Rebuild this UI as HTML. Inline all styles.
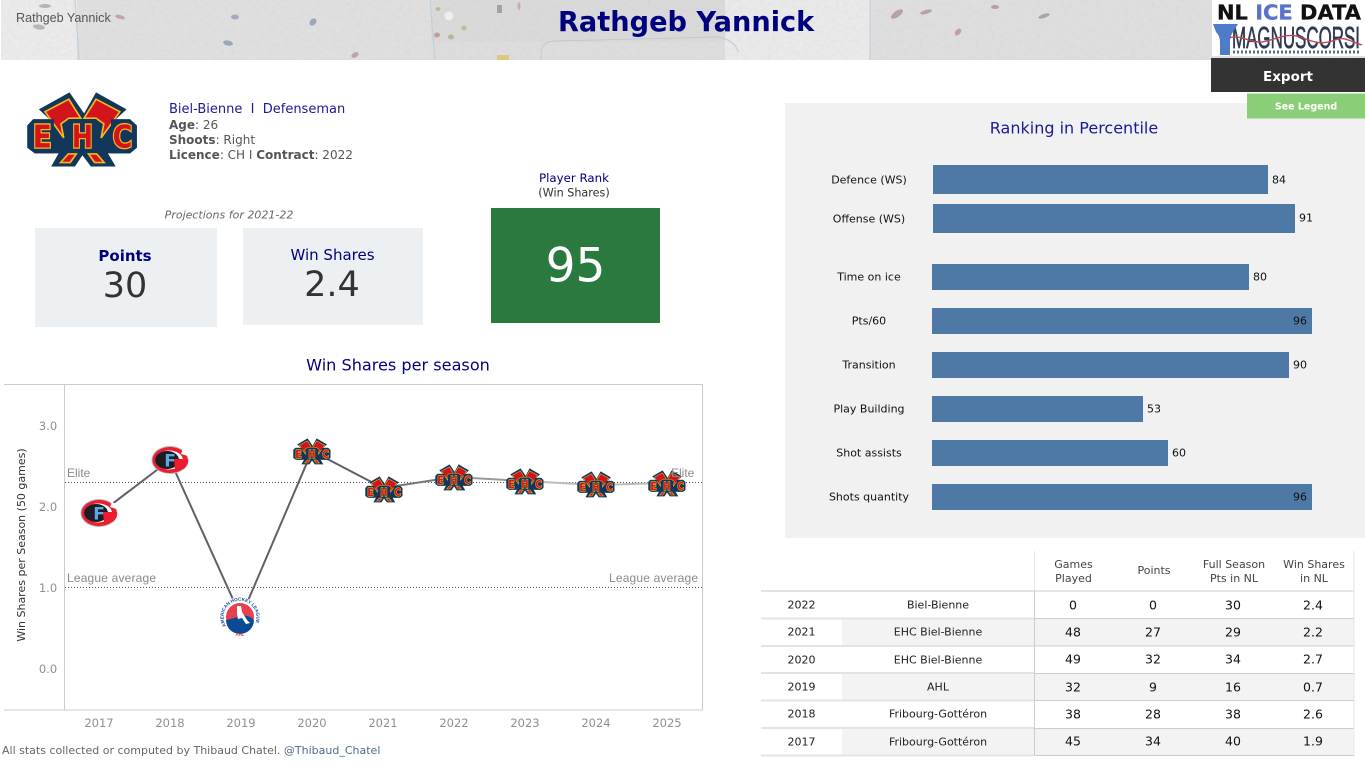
<!DOCTYPE html>
<html><head><meta charset="utf-8"><title>Rathgeb Yannick</title>
<style>
html,body{margin:0;padding:0;background:#fff}
#p{position:relative;width:1365px;height:767px;overflow:hidden;background:#fff;font-family:"DejaVu Sans","Liberation Sans",sans-serif}
.a{position:absolute;white-space:nowrap}
.c{transform:translate(-50%,-50%);text-align:center}
.b{position:absolute;background:#4e79a7}
.l{position:absolute;left:769px;width:200px;text-align:center;font-size:11px;color:#111;transform:translateY(-50%)}
.v{position:absolute;font-size:11px;color:#111;transform:translateY(-50%)}
.t{position:absolute;transform:translate(-50%,-50%);white-space:nowrap;color:#222}
.n{font-size:12.5px;color:#111}
.y{font-size:11px}
.h{font-size:11px;color:#444;text-align:center;line-height:14px}
svg{position:absolute;left:0;top:0}
</style></head><body><div id="p">

<svg width="1365" height="60" style="top:0">
<defs><filter id="nz" x="0" y="0" width="100%" height="100%"><feTurbulence type="fractalNoise" baseFrequency=".25 .3" numOctaves="3" seed="4"/><feColorMatrix values="0 0 0 0 .55  0 0 0 0 .55  0 0 0 0 .55  .9 .9 0 0 -.62"/></filter></defs>
<rect x="1" width="1364" height="60" fill="#e0e0e0"/>
<rect x="1" width="76" height="60" fill="#ececec"/>
<rect x="431" width="295" height="42" fill="#dadada"/>
<rect x="431" y="42" width="295" height="18" fill="#dedede"/>
<rect x="725" width="145" height="60" fill="#ebebeb"/>
<rect x="870" width="341" height="60" fill="#dfdfdf"/>
<rect x="1" width="1364" height="60" filter="url(#nz)" opacity=".25"/>
<path d="M75 0L79 60M430 0L435 60M870 0V60" stroke="#bccddd" stroke-width="1" fill="none"/>
<path d="M541 60V53Q541 41 556 41L718 37Q735 40 738 52" stroke="#bcc9d9" fill="none"/>
<g opacity=".7">
<ellipse cx="45" cy="6" rx="6" ry="2" fill="#a0a0a0"/><ellipse cx="39" cy="27" rx="6" ry="2.5" fill="#aaa0a0" transform="rotate(8 39 27)"/>
<ellipse cx="120" cy="17" rx="5" ry="2" fill="#b88a92" transform="rotate(15 120 17)"/><ellipse cx="235" cy="17" rx="4" ry="2.5" fill="#8a97b0"/>
<ellipse cx="228" cy="43" rx="5" ry="2.5" fill="#7f90ab" transform="rotate(10 228 43)"/><ellipse cx="313" cy="22" rx="3" ry="4" fill="#7f90ab" transform="rotate(40 313 22)"/>
<ellipse cx="355" cy="55" rx="4" ry="2.5" fill="#b88a92" transform="rotate(-30 355 55)"/><ellipse cx="437" cy="35" rx="3" ry="2.5" fill="#b58a7c"/>
<ellipse cx="438" cy="9" rx="2.5" ry="2" fill="#aab27c"/><ellipse cx="449" cy="16" rx="4.5" ry="4.5" fill="#f7f7f7"/>
<ellipse cx="451" cy="37" rx="3" ry="2.5" fill="#a0ad84"/><ellipse cx="464" cy="28" rx="2.5" ry="2.5" fill="#b5ae7c"/>
<rect x="497" y="5" width="5" height="8" fill="#8c8c8c"/><ellipse cx="519" cy="6" rx="1.5" ry="4" fill="#c49ca2"/>
<rect x="497" y="55" width="12" height="5" fill="#e2c050"/>
<ellipse cx="897" cy="14" rx="7" ry="3" fill="#ad8493" transform="rotate(-35 897 14)"/><ellipse cx="926" cy="12" rx="6" ry="2" fill="#ad8493" transform="rotate(-15 926 12)"/>
<ellipse cx="995" cy="7" rx="4" ry="2" fill="#ad8493"/><ellipse cx="1044" cy="16" rx="6" ry="2" fill="#9f8a93" transform="rotate(-20 1044 16)"/>
<ellipse cx="958" cy="32" rx="4" ry="2.5" fill="#b58493" transform="rotate(-50 958 32)"/>
</g>
</svg>
<div class="a" style="left:16px;top:11px;font:12.6px 'Liberation Sans',sans-serif;color:#555">Rathgeb Yannick</div>
<div class="a" style="left:558px;top:6px;font-weight:bold;font-size:27.2px;color:#00007f;line-height:34px">Rathgeb Yannick</div>

<div class="a" style="left:1212px;top:0;width:153px;height:56px;background:#fff"></div>
<svg width="1365" height="60">
<text x="1217" y="19.5" font-family="'DejaVu Sans',sans-serif" font-weight="bold" font-size="20" textLength="144" lengthAdjust="spacingAndGlyphs" stroke="#111" stroke-width=".3"><tspan fill="#111">NL </tspan><tspan fill="#5a72c8" stroke="#5a72c8">ICE </tspan><tspan fill="#111">DATA</tspan></text>
<text x="1232" y="48" font-family="'Liberation Sans',sans-serif" font-size="31" fill="#2f3a50" stroke="#2f3a50" stroke-width=".7" textLength="128" lengthAdjust="spacingAndGlyphs">MAGNUSCORSI</text>
<path d="M1213 24H1238L1233 32Q1230 36 1230 42V55H1220V42Q1220 36 1216 32Z" fill="#4f7cc8"/>
<path d="M1229 38C1240 34 1250 43 1262 42C1275 40 1287 32 1300 37C1312 41 1320 46 1335 40C1343 36 1350 41 1362 45" stroke="#b84a5a" stroke-width="1.4" fill="none"/>
<path d="M1233 52H1360" stroke="#5a6a80" stroke-width="3" stroke-dasharray="2 2"/>
</svg>
<div class="a c" style="left:1288px;top:75px;width:154px;height:34px;background:#333;color:#fff;font-weight:bold;font-size:13.5px;line-height:39px">Export</div>

<!-- ranking panel -->
<div class="a" style="left:785px;top:103px;width:580px;height:435px;background:#f1f1f1"></div>
<div class="a c" style="left:1306px;top:105.5px;width:118px;height:25px;background:#8bce79;color:#fff;font-weight:bold;font-size:9.5px;line-height:27px">See Legend</div>
<div class="a c" style="left:1074px;top:128px;font-size:16px;color:#1a1a9a">Ranking in Percentile</div>

<!-- big logo -->
<svg width="1365" height="767" style="pointer-events:none">
<defs>
<g id="ehcS">
<path fill="#12375a" d="M72 88L162 36L205 100L240 36L330 88L298 118H340L360 137V205L340 222H275L298 262H225L200 228L178 262H108L130 222H60L38 205V137L55 118H103Z"/>
<path fill="#d3141c" stroke="#f4b81c" stroke-width="5" d="M90 95L160 57L195 115H160L137 132L145 175Z"/>
<path fill="#d3141c" stroke="#f4b81c" stroke-width="5" d="M310 95L240 57L205 115H240L263 132L255 175Z"/>
<path fill="#12375a" d="M38 137L55 118H116V222H60L38 205ZM284 118H340L360 137V205L340 222H284ZM158 118H242V222H158Z"/>
<path fill="#d3141c" stroke="#f4b81c" stroke-width="5" d="M158 224L136 250H164L182 224ZM218 224L236 250H264L242 224Z"/>
</g>
</defs>
<g transform="translate(27,92) scale(.34,.328) translate(-37,-35)">
<use href="#ehcS"/>
<g font-family="'DejaVu Sans',sans-serif" font-weight="bold" font-size="96" fill="#d3141c" stroke="#f4b81c" stroke-width="8" paint-order="stroke" text-anchor="middle"><text x="82" y="205" textLength="56" lengthAdjust="spacingAndGlyphs">E</text><text x="200" y="205" textLength="62" lengthAdjust="spacingAndGlyphs">H</text><text x="318" y="205" textLength="58" lengthAdjust="spacingAndGlyphs">C</text></g>
</g>

<!-- chart frame -->
<path d="M4 384.5H702.5V710H4M64.5 385V710" stroke="#ccc" fill="none"/>
<path d="M65 482.5H702M65 587.5H702" stroke="#555" stroke-dasharray="1 2" fill="none"/>
<path d="M99 514L170 460L241 617L312 451L383 488" stroke="#5f5f68" stroke-width="2" fill="none"/>
<path d="M383 488L454 477" stroke="#77777d" stroke-width="2" fill="none"/>
<path d="M454 477L525 481" stroke="#9a9a9e" stroke-width="2" fill="none"/>
<path d="M525 481L596 485L667 483" stroke="#bbb" stroke-width="2" fill="none"/>

<!-- Fribourg logos -->
<g transform="translate(99,513)"><ellipse rx="18.5" ry="14" fill="#b5b5b5"/><ellipse rx="17.5" ry="13" fill="#ed1c2e"/><ellipse cx="-1" rx="14" ry="9.5" fill="#fff"/><ellipse cx="-3" rx="12" ry="9" fill="#1c1c22"/><path d="M4 -1H18V3Q16 9 10 10H5Z" fill="#ed1c2e"/><path d="M13 -11L19 -8L18 -4L11 -6Z" fill="#fff"/><text x="0" y="6.5" font-family="'DejaVu Sans',sans-serif" font-weight="bold" font-size="17" fill="#5aa9e6" text-anchor="middle">F</text></g>
<g transform="translate(170,460)"><ellipse rx="18.5" ry="14" fill="#b5b5b5"/><ellipse rx="17.5" ry="13" fill="#ed1c2e"/><ellipse cx="-1" rx="14" ry="9.5" fill="#fff"/><ellipse cx="-3" rx="12" ry="9" fill="#1c1c22"/><path d="M4 -1H18V3Q16 9 10 10H5Z" fill="#ed1c2e"/><path d="M13 -11L19 -8L18 -4L11 -6Z" fill="#fff"/><text x="0" y="6.5" font-family="'DejaVu Sans',sans-serif" font-weight="bold" font-size="17" fill="#5aa9e6" text-anchor="middle">F</text></g>

<!-- AHL -->
<g transform="translate(240,617)">
<circle r="20" fill="#fff"/>
<circle r="14" fill="#e8404f"/>
<path d="M-14 3A14 14 0 0 0 14 3Q8 -3 0 -1Q-8 2 -14 3Z" fill="#0d4a94"/>
<path d="M-3 -11L1 -11L2 -5L7 3L10 6L6 7L2 1L-2 2L-3 -3Z" fill="#fff"/>
<defs><path id="ahlc" d="M-14 9A16.5 16.5 0 1 1 14 9"/></defs>
<text font-family="'Liberation Sans',sans-serif" font-size="4.6" font-weight="bold" fill="#0d4a94"><textPath href="#ahlc">AMERICAN HOCKEY LEAGUE</textPath></text>
<text y="19" text-anchor="middle" font-family="'Liberation Sans',sans-serif" font-size="4.5" font-weight="bold" fill="#e8404f">AHL</text>
</g>

<!-- EHC small logos -->
<g transform="translate(289,436) scale(.115)"><use href="#ehcS" transform="translate(0,-15)"/><g font-family="'DejaVu Sans',sans-serif" font-weight="bold" font-size="96" fill="#d3141c" stroke="#f4b81c" stroke-width="10" paint-order="stroke" text-anchor="middle"><text x="82" y="190" textLength="56" lengthAdjust="spacingAndGlyphs">E</text><text x="200" y="190" textLength="62" lengthAdjust="spacingAndGlyphs">H</text><text x="318" y="190" textLength="58" lengthAdjust="spacingAndGlyphs">C</text></g></g>
<g transform="translate(361,474) scale(.115)"><use href="#ehcS" transform="translate(0,-15)"/><g font-family="'DejaVu Sans',sans-serif" font-weight="bold" font-size="96" fill="#d3141c" stroke="#f4b81c" stroke-width="10" paint-order="stroke" text-anchor="middle"><text x="82" y="190" textLength="56" lengthAdjust="spacingAndGlyphs">E</text><text x="200" y="190" textLength="62" lengthAdjust="spacingAndGlyphs">H</text><text x="318" y="190" textLength="58" lengthAdjust="spacingAndGlyphs">C</text></g></g>
<g transform="translate(431,462) scale(.115)"><use href="#ehcS" transform="translate(0,-15)"/><g font-family="'DejaVu Sans',sans-serif" font-weight="bold" font-size="96" fill="#d3141c" stroke="#f4b81c" stroke-width="10" paint-order="stroke" text-anchor="middle"><text x="82" y="190" textLength="56" lengthAdjust="spacingAndGlyphs">E</text><text x="200" y="190" textLength="62" lengthAdjust="spacingAndGlyphs">H</text><text x="318" y="190" textLength="58" lengthAdjust="spacingAndGlyphs">C</text></g></g>
<g transform="translate(502,466) scale(.115)"><use href="#ehcS" transform="translate(0,-15)"/><g font-family="'DejaVu Sans',sans-serif" font-weight="bold" font-size="96" fill="#d3141c" stroke="#f4b81c" stroke-width="10" paint-order="stroke" text-anchor="middle"><text x="82" y="190" textLength="56" lengthAdjust="spacingAndGlyphs">E</text><text x="200" y="190" textLength="62" lengthAdjust="spacingAndGlyphs">H</text><text x="318" y="190" textLength="58" lengthAdjust="spacingAndGlyphs">C</text></g></g>
<g transform="translate(573,469) scale(.115)"><use href="#ehcS" transform="translate(0,-15)"/><g font-family="'DejaVu Sans',sans-serif" font-weight="bold" font-size="96" fill="#d3141c" stroke="#f4b81c" stroke-width="10" paint-order="stroke" text-anchor="middle"><text x="82" y="190" textLength="56" lengthAdjust="spacingAndGlyphs">E</text><text x="200" y="190" textLength="62" lengthAdjust="spacingAndGlyphs">H</text><text x="318" y="190" textLength="58" lengthAdjust="spacingAndGlyphs">C</text></g></g>
<g transform="translate(644,468) scale(.115)"><use href="#ehcS" transform="translate(0,-15)"/><g font-family="'DejaVu Sans',sans-serif" font-weight="bold" font-size="96" fill="#d3141c" stroke="#f4b81c" stroke-width="10" paint-order="stroke" text-anchor="middle"><text x="82" y="190" textLength="56" lengthAdjust="spacingAndGlyphs">E</text><text x="200" y="190" textLength="62" lengthAdjust="spacingAndGlyphs">H</text><text x="318" y="190" textLength="58" lengthAdjust="spacingAndGlyphs">C</text></g></g>

<g font-family="'Liberation Sans',sans-serif" font-size="12" fill="#8a8a8a">
<text x="67" y="477">Elite</text><text x="671" y="477">Elite</text>
<text x="67" y="582" textLength="89">League average</text><text x="609" y="582" textLength="89">League average</text>
</g>
<g font-family="'DejaVu Sans',sans-serif" font-size="11.5" fill="#8f8f8f" text-anchor="middle">
<text x="48" y="430">3.0</text><text x="48" y="511">2.0</text><text x="48" y="592">1.0</text><text x="48" y="673">0.0</text>
<text x="99" y="727">2017</text><text x="170" y="727">2018</text><text x="241" y="727">2019</text><text x="312" y="727">2020</text><text x="383" y="727">2021</text><text x="454" y="727">2022</text><text x="525" y="727">2023</text><text x="596" y="727">2024</text><text x="667" y="727">2025</text>
</g>
<text transform="translate(25,545) rotate(-90)" text-anchor="middle" font-family="'DejaVu Sans',sans-serif" font-size="11" fill="#333">Win Shares per Season (50 games)</text>
</svg>

<!-- player info -->
<div class="a" style="left:169px;top:102px;font-size:13px;color:#1a1a9a;line-height:16px;white-space:pre">Biel-Bienne  I  Defenseman</div>
<div class="a" style="left:169px;top:118px;font-size:12px;color:#555;line-height:15px"><b>Age</b>: 26<br><b>Shoots</b>: Right<br><b>Licence</b>: CH I <b>Contract</b>: 2022</div>

<div class="a c" style="left:229px;top:215px;font-size:11px;font-style:italic;color:#666">Projections for 2021-22</div>

<div class="a" style="left:35px;top:228px;width:182px;height:99px;background:#edf0f3"></div>
<div class="a c" style="left:125px;top:256px;font-size:15px;font-weight:bold;color:#00007f">Points</div>
<div class="a c" style="left:125px;top:286px;font-size:35px;color:#333">30</div>
<div class="a" style="left:243px;top:228px;width:180px;height:97px;background:#edf0f3"></div>
<div class="a c" style="left:332.5px;top:255px;font-size:15px;color:#00007f">Win Shares</div>
<div class="a c" style="left:332px;top:285px;font-size:35px;color:#333">2.4</div>

<div class="a c" style="left:574px;top:178px;font-size:11.8px;color:#00007f">Player Rank</div>
<div class="a c" style="left:574px;top:192.5px;font-size:11.2px;color:#333">(Win Shares)</div>
<div class="a" style="left:491px;top:208px;width:169px;height:115px;background:#2a7a3f"></div>
<div class="a c" style="left:575.5px;top:266px;font-size:47px;color:#fff">95</div>

<div class="a c" style="left:398px;top:365px;font-size:16.1px;color:#00007f">Win Shares per season</div>
<div class="a" style="left:2px;top:744px;font-size:11px;color:#666;line-height:14px">All stats collected or computed by Thibaud Chatel. <span style="color:#4f6b8f">@Thibaud_Chatel</span></div>

<!-- ranking bars -->
<div class="b" style="left:933px;top:165px;width:335px;height:29px"></div>
<div class="b" style="left:933px;top:204px;width:362px;height:29px"></div>
<div class="b" style="left:932px;top:264px;width:317px;height:26px"></div>
<div class="b" style="left:932px;top:308px;width:380px;height:26px"></div>
<div class="b" style="left:932px;top:352px;width:357px;height:26px"></div>
<div class="b" style="left:932px;top:396px;width:211px;height:26px"></div>
<div class="b" style="left:932px;top:440px;width:236px;height:26px"></div>
<div class="b" style="left:932px;top:484px;width:380px;height:26px"></div>

<div class="l" style="top:180px">Defence (WS)</div>
<div class="l" style="top:219px">Offense (WS)</div>
<div class="l" style="top:277px">Time on ice</div>
<div class="l" style="top:321px">Pts/60</div>
<div class="l" style="top:365px">Transition</div>
<div class="l" style="top:409px">Play Building</div>
<div class="l" style="top:453px">Shot assists</div>
<div class="l" style="top:497px">Shots quantity</div>

<div class="v" style="left:1272px;top:180px">84</div>
<div class="v" style="left:1299px;top:218px">91</div>
<div class="v" style="left:1253px;top:277px">80</div>
<div class="v" style="left:1293px;top:321px">96</div>
<div class="v" style="left:1293px;top:365px">90</div>
<div class="v" style="left:1147px;top:409px">53</div>
<div class="v" style="left:1172px;top:453px">60</div>
<div class="v" style="left:1293px;top:497px">96</div>

<!-- table -->
<div class="a" style="left:842px;top:619px;width:512px;height:27px;background:#f3f3f3"></div>
<div class="a" style="left:842px;top:674px;width:512px;height:27px;background:#f3f3f3"></div>
<div class="a" style="left:842px;top:729px;width:512px;height:26px;background:#f3f3f3"></div>
<svg width="1365" height="767">
<path d="M761 591H1034M761 618.5H1034M761 646H1034M761 673H1034M761 700.5H1034M761 728H1034M761 755.5H1034" stroke="#e4e4e4" stroke-width="2" fill="none"/>
<path d="M1034 591H1354M1034 618.5H1354M1034 646H1354M1034 673.5H1354M1034 700.5H1354M1034 728.5H1354M1034 755.5H1354" stroke="#ccc" fill="none"/>
<path d="M1034.5 591V756" stroke="#ccc" fill="none"/>
<path d="M1034.5 551V591M1354 551V756" stroke="#e6e6e6" fill="none"/>
</svg>
<div class="t h" style="left:1073.5px;top:572px">Games<br>Played</div>
<div class="t h" style="left:1154px;top:571px">Points</div>
<div class="t h" style="left:1234px;top:572px">Full Season<br>Pts in NL</div>
<div class="t h" style="left:1314px;top:572px">Win Shares<br>in NL</div>

<div class="t y" style="left:801.5px;top:605px">2022</div><div class="t y" style="left:938px;top:605px">Biel-Bienne</div><div class="t n" style="left:1073px;top:605px">0</div><div class="t n" style="left:1153px;top:605px">0</div><div class="t n" style="left:1233px;top:605px">30</div><div class="t n" style="left:1313px;top:605px">2.4</div>
<div class="t y" style="left:801.5px;top:632px">2021</div><div class="t y" style="left:938px;top:632px">EHC Biel-Bienne</div><div class="t n" style="left:1073px;top:632px">48</div><div class="t n" style="left:1153px;top:632px">27</div><div class="t n" style="left:1233px;top:632px">29</div><div class="t n" style="left:1313px;top:632px">2.2</div>
<div class="t y" style="left:801.5px;top:660px">2020</div><div class="t y" style="left:938px;top:660px">EHC Biel-Bienne</div><div class="t n" style="left:1073px;top:659px">49</div><div class="t n" style="left:1153px;top:659px">32</div><div class="t n" style="left:1233px;top:659px">34</div><div class="t n" style="left:1313px;top:659px">2.7</div>
<div class="t y" style="left:801.5px;top:687px">2019</div><div class="t y" style="left:938px;top:687px">AHL</div><div class="t n" style="left:1073px;top:687px">32</div><div class="t n" style="left:1153px;top:687px">9</div><div class="t n" style="left:1233px;top:687px">16</div><div class="t n" style="left:1313px;top:687px">0.7</div>
<div class="t y" style="left:801.5px;top:714px">2018</div><div class="t y" style="left:938px;top:714px">Fribourg-Gottéron</div><div class="t n" style="left:1073px;top:714px">38</div><div class="t n" style="left:1153px;top:714px">28</div><div class="t n" style="left:1233px;top:714px">38</div><div class="t n" style="left:1313px;top:714px">2.6</div>
<div class="t y" style="left:801.5px;top:742px">2017</div><div class="t y" style="left:938px;top:742px">Fribourg-Gottéron</div><div class="t n" style="left:1073px;top:741px">45</div><div class="t n" style="left:1153px;top:741px">34</div><div class="t n" style="left:1233px;top:741px">40</div><div class="t n" style="left:1313px;top:741px">1.9</div>

</div></body></html>
